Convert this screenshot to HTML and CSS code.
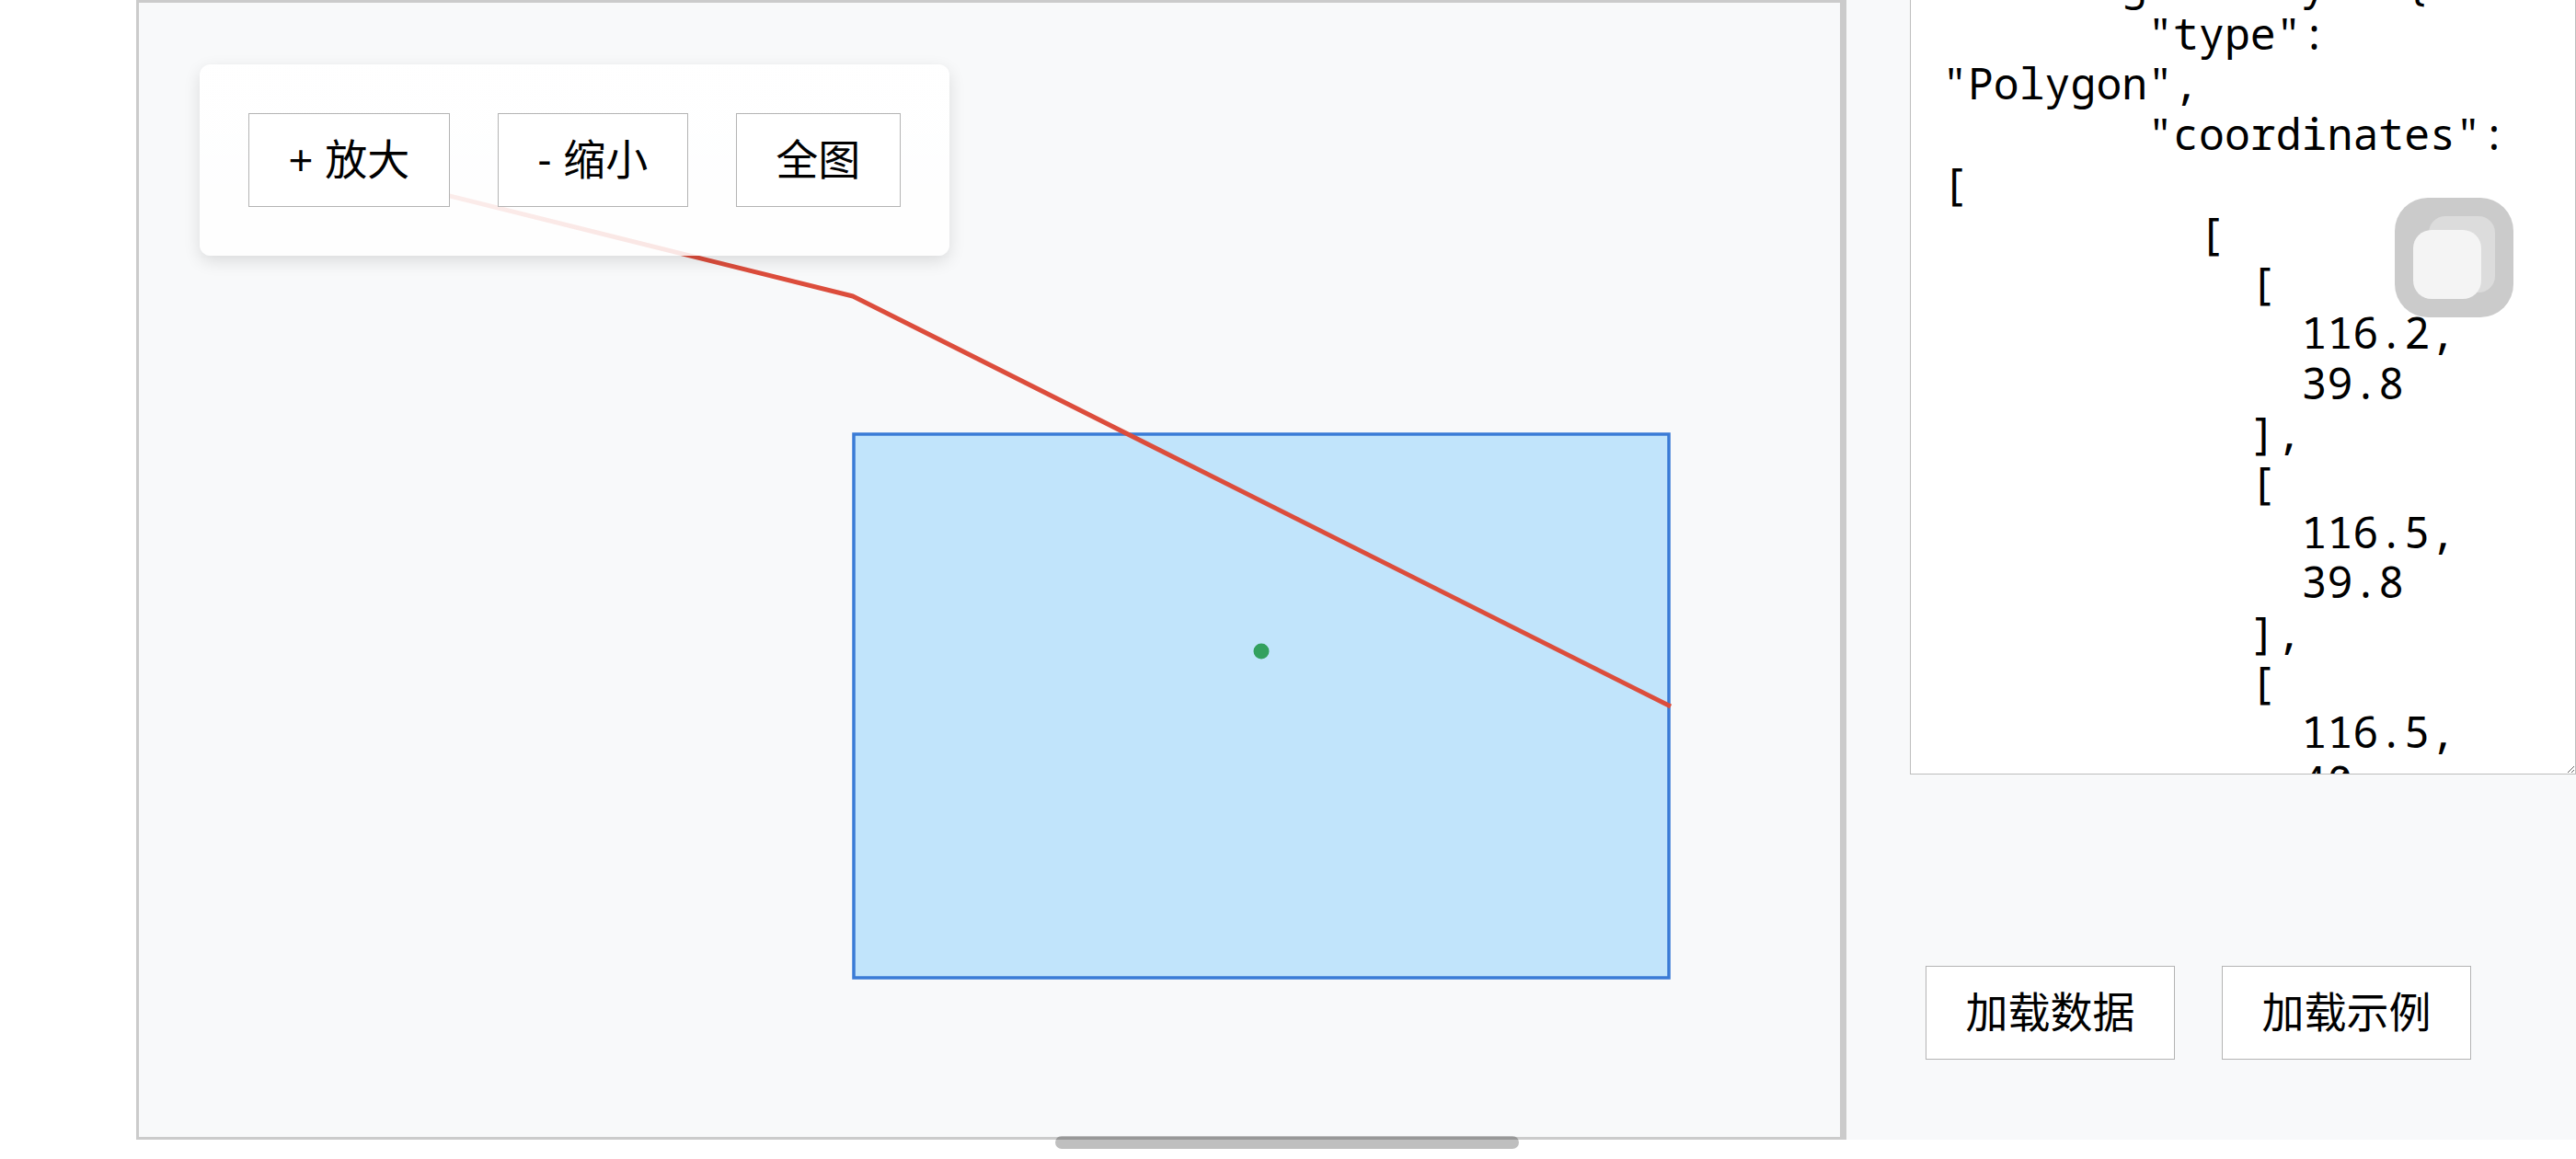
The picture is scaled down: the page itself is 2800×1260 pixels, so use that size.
FILE: index.html
```html
<!DOCTYPE html>
<html lang="zh-CN">
<head>
<meta charset="utf-8">
<title>GeoJSON 查看器</title>
<link rel="stylesheet" href="styles.css">
</head>
<body>
<div class="app">
  <div class="map">
    <svg class="map-canvas" viewBox="151 3 1849 1233" preserveAspectRatio="none" xmlns="http://www.w3.org/2000/svg">
      <rect class="poly" x="928" y="472" width="886" height="591"/>
      <polyline class="route" points="334,174.5 927,322 1816,768"/>
      <circle class="pt" cx="1371" cy="708" r="8.5"/>
    </svg>
    <div class="toolbar">
      <button class="btn">+ 放大</button>
      <button class="btn">- 缩小</button>
      <button class="btn">全图</button>
    </div>
  </div>
  <div class="splitter"></div>
  <div class="panel">
    <textarea class="json" spellcheck="false">      "geometry": {
        "type": "Polygon",
        "coordinates": [
          [
            [
              116.2,
              39.8
            ],
            [
              116.5,
              39.8
            ],
            [
              116.5,
              40
            ],
            [
              116.2,
              40
            ],
            [
              116.2,
              39.8
            ]
          ]
        ]
      },
      "properties": {}
    }
  ]
}</textarea>
    <div class="actions">
      <button class="btn">加载数据</button>
      <button class="btn">加载示例</button>
    </div>
    <div class="touch"><span class="touch-back"></span><span class="touch-front"></span></div>
  </div>
  <div class="hscroll"></div>
</div>
</body>
</html>
```

FILE: styles.css
```css
html, body {
  margin: 0;
  padding: 0;
}

body {
  width: 2800px;
  height: 1260px;
  overflow: hidden;
  background: #ffffff;
  font-family: "Liberation Sans", "Noto Sans CJK SC", sans-serif;
}

.app {
  position: relative;
  display: flex;
  height: 1239px;
  padding-left: 148px;
}

.map {
  position: relative;
  flex: 0 0 1855px;
  box-sizing: border-box;
  height: 1239px;
  border: 3px solid #cbcbcb;
  background: #f8f9fa;
  overflow: hidden;
}

.map-canvas {
  position: absolute;
  left: 0;
  top: 0;
  width: 1849px;
  height: 1233px;
}

.poly {
  fill: #c1e4fb;
  stroke: #3a7bd6;
  stroke-width: 3.5;
}

.route {
  fill: none;
  stroke: #dc4d3c;
  stroke-width: 5;
  stroke-linejoin: round;
}

.pt {
  fill: #33a05e;
}

.toolbar {
  position: absolute;
  left: 66px;
  top: 67px;
  display: flex;
  gap: 52px;
  padding: 53px;
  border-radius: 12px;
  background: linear-gradient(rgba(255, 255, 255, 0.97), rgba(255, 255, 255, 0.86));
  box-shadow: 0 6px 18px rgba(0, 0, 0, 0.12);
}

.btn {
  box-sizing: border-box;
  height: 102px;
  padding: 0 42.5px;
  margin: 0;
  border: 1px solid #b4b4b4;
  border-radius: 0;
  background: #ffffff;
  color: #000000;
  font-family: "Liberation Sans", "Noto Sans CJK SC", sans-serif;
  font-size: 46px;
  line-height: 1;
  white-space: nowrap;
}

.splitter {
  flex: 0 0 4px;
  background: #cbcbcb;
}

.panel {
  position: relative;
  flex: 1;
  display: flex;
  flex-direction: column;
  box-sizing: border-box;
  height: 1239px;
  padding: 0 0 87px 69px;
  background: #f8f9fa;
  overflow: hidden;
}

.json {
  flex: none;
  box-sizing: border-box;
  width: 724px;
  height: 923px;
  margin: -81px 0 0 0;
  padding: 35px 48px 35px 34px;
  border: 1px solid #bdbdbd;
  background: #ffffff;
  color: #000000;
  font-family: "Noto Sans Mono", "DejaVu Sans Mono", monospace;
  font-size: 46.5px;
  line-height: 54.2px;
  overflow: hidden;
  resize: both;
  outline: none;
}

.actions {
  margin-top: auto;
  display: flex;
  gap: 51px;
  padding-left: 17px;
}

.touch {
  position: absolute;
  left: 596px;
  top: 215px;
  width: 129px;
  height: 130px;
  border-radius: 36px;
  background: #cbcbcb;
  filter: blur(0.6px);
}

.touch-back {
  position: absolute;
  left: 37px;
  top: 20px;
  width: 72px;
  height: 83px;
  border-radius: 18px;
  background: #dcdcdc;
}

.touch-front {
  position: absolute;
  left: 20px;
  top: 35px;
  width: 74px;
  height: 75px;
  border-radius: 20px;
  background: #f4f4f4;
}

.hscroll {
  position: absolute;
  left: 1147px;
  top: 1235px;
  width: 504px;
  height: 14px;
  border-radius: 7px;
  background: rgba(0, 0, 0, 0.25);
}
```
